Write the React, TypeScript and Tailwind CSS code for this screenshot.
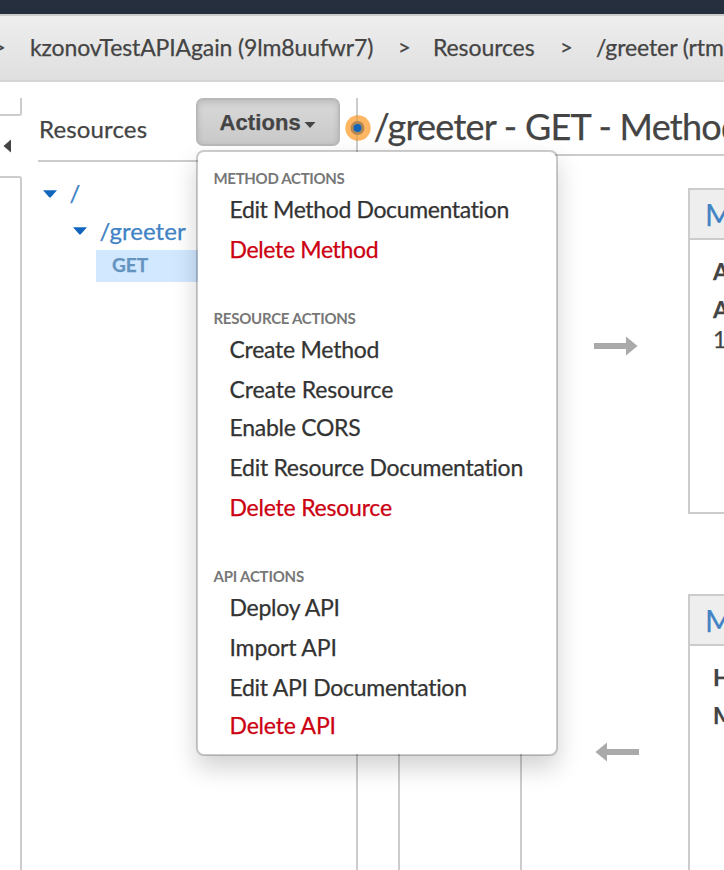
import React from "react";

type Item = { label: string; danger?: boolean; compact?: boolean; tracking: string };
type Section = { title: string; tracking: string; items: Item[] };

const sections: Section[] = [
  {
    title: "METHOD ACTIONS",
    tracking: "tracking-[-0.32px]",
    items: [
      { label: "Edit Method Documentation", tracking: "tracking-[-0.36px]" },
      { label: "Delete Method", danger: true, tracking: "tracking-[-0.35px]" },
    ],
  },
  {
    title: "RESOURCE ACTIONS",
    tracking: "tracking-[-0.27px]",
    items: [
      { label: "Create Method", tracking: "tracking-[-0.25px]" },
      { label: "Create Resource", compact: true, tracking: "tracking-[-0.1px]" },
      { label: "Enable CORS", tracking: "tracking-[-0.27px]" },
      { label: "Edit Resource Documentation", tracking: "tracking-[-0.27px]" },
      { label: "Delete Resource", danger: true, tracking: "tracking-[-0.22px]" },
    ],
  },
  {
    title: "API ACTIONS",
    tracking: "tracking-[-0.2px]",
    items: [
      { label: "Deploy API", tracking: "tracking-[-0.25px]" },
      { label: "Import API", tracking: "tracking-[-0.15px]" },
      { label: "Edit API Documentation", compact: true, tracking: "tracking-[-0.28px]" },
      { label: "Delete API", danger: true, tracking: "tracking-[-0.2px]" },
    ],
  },
];

function Caret() {
  return (
    <svg className="block h-[8px] w-[14px] shrink-0" viewBox="0 0 14 8">
      <path d="M0 0.3H14L7.8 7.2Q7 8 6.2 7.2Z" fill="#1166bb" />
    </svg>
  );
}

function ActionsMenu() {
  return (
    <div className="absolute left-[196px] top-[150px] z-20 h-[606px] w-[362px] rounded-[8px] border-2 border-black/20 bg-white bg-clip-padding pt-[14px] shadow-[0_12px_24px_rgba(0,0,0,0.175)]">
      <div className="flex flex-col gap-9">
        {sections.map((s) => (
          <section key={s.title}>
            <h3 className={`h-6 pl-[15.5px] text-[15px] font-bold leading-[25px] text-[#777] [-webkit-text-stroke:0] ${s.tracking}`}>{s.title}</h3>
            <ul>
              {s.items.map((it) => (
                <li
                  key={it.label}
                  className={`whitespace-nowrap pl-[31.5px] text-[23px] leading-[38px] ${it.compact ? "h-[38px]" : "h-10"} ${it.danger ? "text-[#cc0011]" : "text-[#333]"} ${it.tracking}`}
                >
                  {it.label}
                </li>
              ))}
            </ul>
          </section>
        ))}
      </div>
    </div>
  );
}

function Breadcrumbs() {
  return (
    <nav className="flex h-[68px] shrink-0 items-center overflow-hidden whitespace-nowrap border-y-2 border-t-[#ccc] border-b-[#d5d5d5] bg-linear-to-b from-[#eeeeee] to-[#dfdfdf] pb-[2px] text-[23px] leading-[32px]">
      <span className="-ml-[7px] w-[37px] shrink-0 text-[22px]">&gt;</span>
      <span className="w-[368px] shrink-0 tracking-[-0.13px]">kzonovTestAPIAgain (9lm8uufwr7)</span>
      <span className="w-[35px] shrink-0 text-[22px]">&gt;</span>
      <span className="w-[127px] shrink-0 tracking-[-0.1px]">Resources</span>
      <span className="w-[36px] shrink-0 text-[22px]">&gt;</span>
      <span className="tracking-[-0.1px]">/greeter (rtm</span>
    </nav>
  );
}

function Card({ children, className }: { children: React.ReactNode; className: string }) {
  return (
    <div className={`w-[300px] shrink-0 border-2 border-[#ccc] ${className}`}>
      <h2 className="h-[50px] border-b-2 border-[#ccc] bg-[#eee] pl-[15px] text-[30px] leading-[49px] text-[#4183c4]">
        Method
      </h2>
      <div className="pl-[23px] text-[23px]">{children}</div>
    </div>
  );
}

export default function App() {
  return (
    <div className="relative flex h-[870px] w-[724px] flex-col overflow-hidden bg-white font-[Lato,sans-serif] text-[#444] [-webkit-text-stroke:0.25px]">
      <div className="h-[14px] shrink-0 bg-[#252f3d]" />
      <Breadcrumbs />
      <div className="flex min-h-0 flex-1 pt-4">
        <div className="flex w-[22px] shrink-0 flex-col">
          <div className="h-[18px] rounded-br-[3px] border-b-2 border-r-2 border-[#ccc]" />
          <div className="flex h-[60px] items-center pl-[3px]">
            <svg className="h-[14px] w-[8px]" viewBox="0 0 8 14">
              <path d="M8 0.5V13.5L0.5 7Z" fill="#444" />
            </svg>
          </div>
          <div className="flex-1 rounded-tr-[3px] border-r-2 border-t-2 border-[#ccc]" />
        </div>

        <aside className="w-[336px] shrink-0 border-r-2 border-[#ccc] pl-4">
          <div className="flex h-[64px] border-b-2 border-[#ccc]">
            <h1 className="w-[158px] pl-px text-[24px] leading-[62px] tracking-[0.15px]">Resources</h1>
            <button className="flex h-[48px] w-[144px] items-center rounded-[7px] border-2 border-[#b9b9b9] bg-linear-to-b from-[#d9d9d9] to-[#c9c9c9] pl-[21.5px] font-['Liberation_Sans',sans-serif] text-[22px] font-bold tracking-[0.1px] shadow-[inset_0_3px_6px_rgba(0,0,0,0.13)]">
              Actions
              <svg className="ml-[3.5px] mt-[5px] h-[6px] w-[12px]" viewBox="0 0 12 6">
                <path d="M0.5 0H11.5L6 6Z" fill="#444" />
              </svg>
            </button>
          </div>
          <div className="text-[24px] text-[#4183c4]">
            <div className="flex h-[50px] items-center pl-[5px] pt-[13px]">
              <Caret />
              <span className="-mt-[2px] ml-[12.5px]">/</span>
            </div>
            <div className="flex h-[38px] items-center pl-[35px]">
              <Caret />
              <span className="-mt-px ml-[12.5px] tracking-[0.05px]">/greeter</span>
            </div>
            <div className="ml-[58px] h-8 bg-[#d1e8ff] pl-[16px] text-[19px] font-bold leading-[29px] text-[#6593c0]">GET</div>
          </div>
        </aside>

        <main className="flex min-w-0 flex-1 flex-col overflow-hidden">
          <h1 className="h-[58px] shrink-0 whitespace-nowrap border-b-2 border-[#ccc] pl-[15.5px] text-[36px] leading-[57px] tracking-[-0.75px]">
            /greeter - GET - Method Execution
          </h1>
          <div className="flex min-h-0 flex-1 pl-10 pt-8">
            <div className="w-[124px] shrink-0 border-x-2 border-t-2 border-[#ccc]" />
            <div className="flex w-[166px] shrink-0 flex-col pl-[72px] pt-[148px]">
              <svg className="h-5 w-[44px] shrink-0" viewBox="0 0 44 20">
                <path d="M0 7H32V0.5L43.5 10L32 19.5V13H0Z" fill="#aaa" />
              </svg>
              <svg className="ml-px mt-[386px] h-5 w-[44px] shrink-0" viewBox="0 0 44 20">
                <path d="M44 7H12V0.5L0.5 10L12 19.5V13H44Z" fill="#aaa" />
              </svg>
            </div>
            <div className="flex shrink-0 flex-col gap-20">
              <Card className="h-[326px]">
                <p className="mt-[12px] h-[38px] font-bold leading-[38px]">Auth: NONE</p>
                <p className="h-[36px] font-bold leading-[38px]">ARN:</p>
                <p className="leading-[26px]">123456</p>
              </Card>
              <Card className="h-[326px]">
                <p className="mt-[12px] h-[38px] font-bold leading-[38px]">HTTP Status: 200</p>
                <p className="font-bold leading-[38px]">Models:</p>
              </Card>
            </div>
          </div>
        </main>
      </div>

      <svg className="absolute left-[345px] top-[115px] z-10 h-[26px] w-[26px]" viewBox="0 0 26 26">
        <circle cx="13" cy="13" r="12.7" fill="#ffb663" />
        <path d="M12 0V26" stroke="#d9a562" strokeWidth="1.5" />
        <circle cx="12.5" cy="13" r="7" fill="#b38853" />
        <circle cx="12.5" cy="13" r="4" fill="#1166bb" />
      </svg>
      <ActionsMenu />
    </div>
  );
}
